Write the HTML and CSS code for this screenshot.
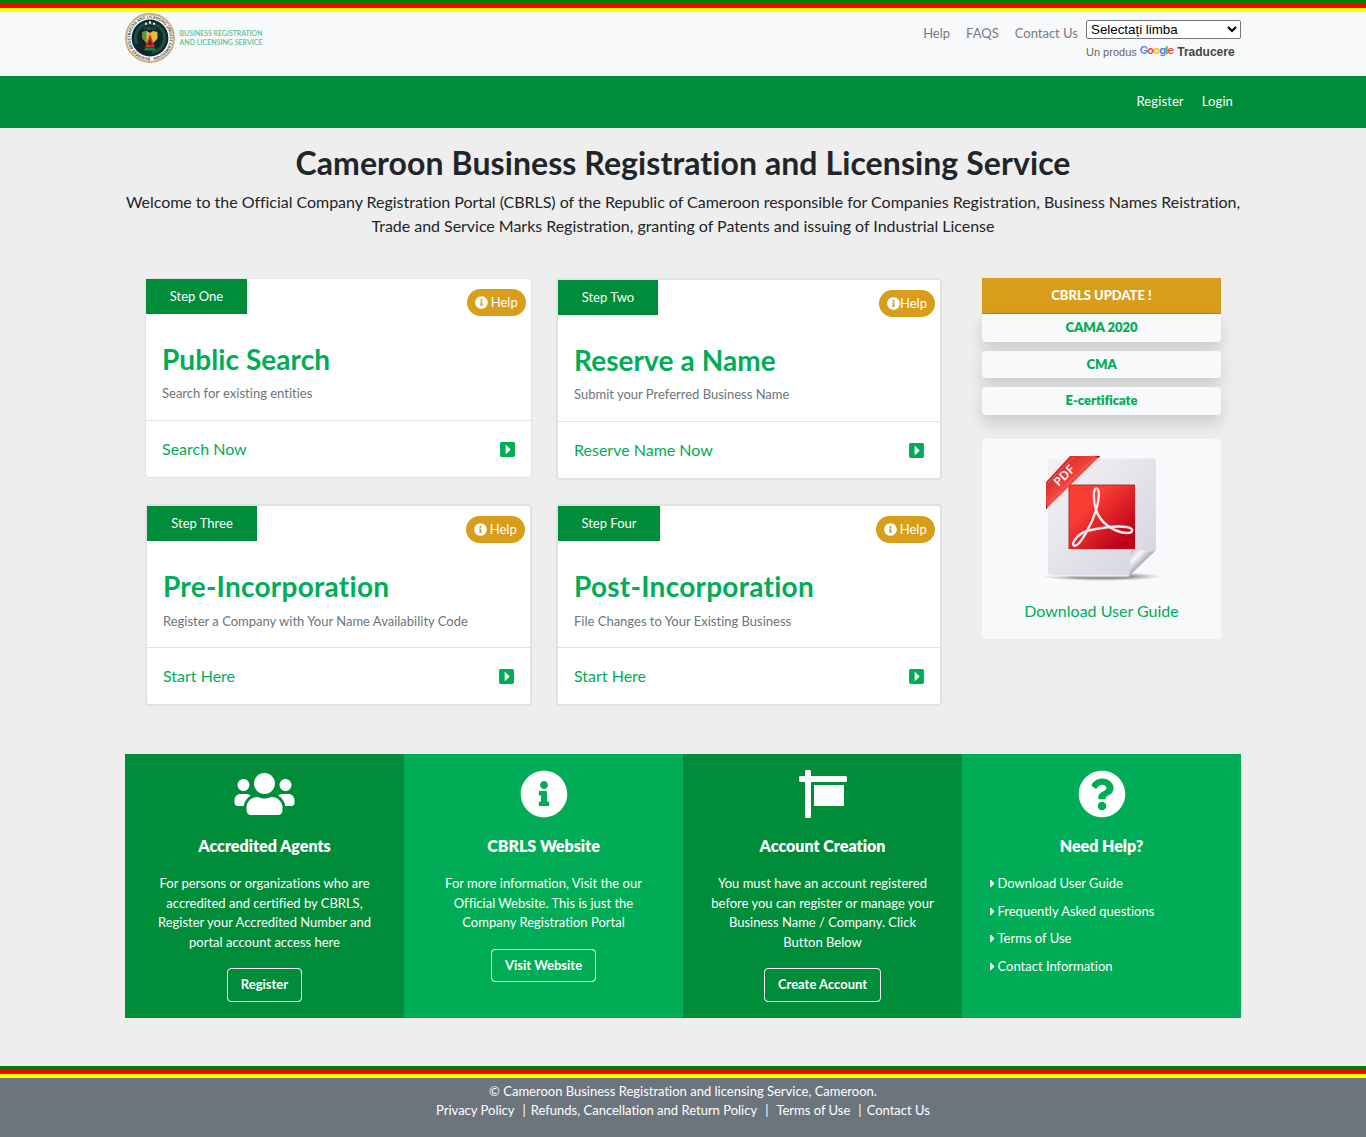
FILE: index.html
```html
<!DOCTYPE html>
<html lang="en">
<head>
<meta charset="utf-8">
<title>Cameroon Business Registration and Licensing Service</title>
<link rel="stylesheet" href="styles.css">
</head>
<body>
<svg class="sprite" aria-hidden="true">
  <symbol id="users" viewBox="0 0 640 512"><path d="M96 224c35.300 0 64-28.700 64-64s-28.700-64-64-64-64 28.700-64 64 28.700 64 64 64zm448 0c35.300 0 64-28.700 64-64s-28.700-64-64-64-64 28.700-64 64 28.700 64 64 64zm32 32h-64c-17.600 0-33.500 7.100-45.100 18.600 40.300 22.100 68.900 62 75.100 109.400h66c17.700 0 32-14.300 32-32v-32c0-35.300-28.700-64-64-64zm-256 0c61.900 0 112-50.100 112-112S381.900 32 320 32 208 82.100 208 144s50.100 112 112 112zm76.800 32h-8.300c-20.800 10-43.900 16-68.500 16s-47.600-6-68.500-16h-8.300C179.600 288 128 339.600 128 403.200V432c0 26.500 21.500 48 48 48h288c26.500 0 48-21.500 48-48v-28.800c0-63.600-51.600-115.200-115.200-115.200zm-223.700-13.400C161.500 263.100 145.600 256 128 256H64c-35.300 0-64 28.700-64 64v32c0 17.700 14.300 32 32 32h65.900c6.300-47.400 34.900-87.300 75.200-109.400z"/></symbol>
  <symbol id="info" viewBox="0 0 512 512"><path d="M256 8C119.043 8 8 119.083 8 256c0 136.997 111.043 248 248 248s248-111.003 248-248C504 119.083 392.957 8 256 8zm0 110c23.196 0 42 18.804 42 42s-18.804 42-42 42-42-18.804-42-42 18.804-42 42-42zm56 254c0 6.627-5.373 12-12 12h-88c-6.627 0-12-5.373-12-12v-24c0-6.627 5.373-12 12-12h12v-64h-12c-6.627 0-12-5.373-12-12v-24c0-6.627 5.373-12 12-12h64c6.627 0 12 5.373 12 12v100h12c6.627 0 12 5.373 12 12v24z"/></symbol>
  <symbol id="sign" viewBox="0 0 512 512"><path d="M496 64H128V16c0-8.800-7.200-16-16-16H80c-8.800 0-16 7.200-16 16v48H16C7.200 64 0 71.200 0 80v32c0 8.800 7.200 16 16 16h48v368c0 8.800 7.200 16 16 16h32c8.800 0 16-7.200 16-16V128h368c8.800 0 16-7.200 16-16V80c0-8.800-7.200-16-16-16zM160 384h320V160H160v224z"/></symbol>
  <symbol id="question" viewBox="0 0 512 512"><path d="M504 256c0 136.997-111.043 248-248 248S8 392.997 8 256C8 119.083 119.043 8 256 8s248 111.083 248 248zM262.655 90c-54.497 0-89.255 22.957-116.549 63.758-3.536 5.286-2.353 12.415 2.715 16.258l34.699 26.310c5.205 3.947 12.621 3.008 16.665-2.122 17.864-22.658 30.113-35.797 57.303-35.797 20.429 0 45.698 13.148 45.698 32.958 0 14.976-12.363 22.667-32.534 33.976C247.128 238.528 216 254.941 216 296v4c0 6.627 5.373 12 12 12h56c6.627 0 12-5.373 12-12v-1.333c0-28.462 83.186-29.647 83.186-106.667 0-58.002-60.165-102-116.531-102zM256 338c-25.365 0-46 20.635-46 46 0 25.364 20.635 46 46 46s46-20.636 46-46c0-25.365-20.635-46-46-46z"/></symbol>
  <symbol id="go" viewBox="0 0 448 512"><path d="M48 32h352c26.510 0 48 21.490 48 48v352c0 26.510-21.490 48-48 48H48c-26.510 0-48-21.490-48-48V80c0-26.510 21.490-48 48-48zm140.485 355.515l123.029-123.030c4.686-4.686 4.686-12.284 0-16.971l-123.029-123.030c-7.560-7.560-20.485-2.206-20.485 8.485v246.059c0 10.691 12.926 16.045 20.485 8.487z"/></symbol>
  <symbol id="caret" viewBox="0 0 192 512"><path d="M0 384.662V127.338c0-17.818 21.543-26.741 34.142-14.142l128.662 128.662c7.810 7.810 7.810 20.474 0 28.284L34.142 398.804C21.543 411.404 0 402.480 0 384.662z"/></symbol>
</svg>

<div class="stripes"></div>
<header class="top">
  <div class="container top-row">
    <svg class="logo" viewBox="0 0 140 52" width="140" height="52">
      <defs><path id="ring" d="M25 45.700a19.700 19.700 0 1 1 .1 0"/></defs>
      <circle cx="25" cy="26" r="24.300" fill="#fff" stroke="#cf9f50" stroke-width="1.200"/>
      <circle cx="25" cy="26" r="23.300" fill="none" stroke="#6f8577" stroke-width=".5"/>
      <text font-size="3.800" font-weight="700" fill="#222"><textPath href="#ring" textLength="120">BUSINESS REGISTRATION AND LICENSING SERVICE CAMEROON</textPath></text>
      <circle cx="25" cy="26" r="18.400" fill="#14242b"/>
      <circle cx="25" cy="26" r="14.600" fill="none" stroke="#17523a" stroke-width="3.200" stroke-dasharray="73.400 18.350" stroke-dashoffset="18.350" transform="rotate(-135 25 26)"/>
      <path d="M17.500 20l4.500-1 3 2 3-2 4.500 1v6.500l-7.500 8-7.500-8z" fill="#e7ba3a"/>
      <path d="M17.500 20l4-1v11l-4-4z" fill="#4d9a4b"/>
      <path d="M25 22l5 13.500H20z" fill="#d02f29"/>
      <path d="M25 27l2.500 6h-5z" fill="#5a2026"/>
      <path d="M20.500 36h9l2 2.500h-13z" fill="#16834b"/>
      <path d="M20 10.700h2v2h-2zM24 9.300h2v2.400h-2zM28 10.700h2v2h-2z" fill="#e7e9e8"/>
      <text x="19" y="18" font-size="3.600" fill="#2f9560" textLength="12">CBRLS</text>
      <g class="wordmark"><text x="54.500" y="24.400" textLength="83" lengthAdjust="spacingAndGlyphs">BUSINESS REGISTRATION</text><text x="54.500" y="33.400" textLength="83" lengthAdjust="spacingAndGlyphs">AND LICENSING SERVICE</text></g>
    </svg>
    <nav class="links"><a>Help</a><a>FAQS</a><a>Contact Us</a></nav>
    <div class="translate">
      <select><option>Selectați limba</option></select>
      <div class="powered">Un produs <span class="google"><i class="b">G</i><i class="r">o</i><i class="y">o</i><i class="b">g</i><i class="g">l</i><i class="r">e</i></span> <b>Traducere</b></div>
    </div>
  </div>
</header>
<div class="bar"><div class="container bar-row"><a>Register</a><a>Login</a></div></div>

<main class="container">
  <h1>Cameroon Business Registration and Licensing Service</h1>
  <p class="lead">Welcome to the Official Company Registration Portal (CBRLS) of the Republic of Cameroon responsible for Companies Registration, Business Names Reistration,<br>Trade and Service Marks Registration, granting of Patents and issuing of Industrial License</p>

  <div class="content">
    <div class="steps">
      <section class="card thin">
        <div class="card-body"><span class="tab t1">Step One</span><span class="pill"><svg><use href="#info"/></svg>Help</span><h3>Public Search</h3><p>Search for existing entities</p></div>
        <div class="card-foot"><a>Search Now</a><svg><use href="#go"/></svg></div>
      </section>
      <section class="card">
        <div class="card-body"><span class="tab t2">Step Two</span><span class="pill tight"><svg><use href="#info"/></svg>Help</span><h3>Reserve a Name</h3><p>Submit your Preferred Business Name</p></div>
        <div class="card-foot"><a>Reserve Name Now</a><svg><use href="#go"/></svg></div>
      </section>
      <section class="card lower">
        <div class="card-body"><span class="tab t3">Step Three</span><span class="pill"><svg><use href="#info"/></svg>Help</span><h3>Pre-Incorporation</h3><p>Register a Company with Your Name Availability Code</p></div>
        <div class="card-foot"><a>Start Here</a><svg><use href="#go"/></svg></div>
      </section>
      <section class="card lower">
        <div class="card-body"><span class="tab t4">Step Four</span><span class="pill"><svg><use href="#info"/></svg>Help</span><h3>Post-Incorporation</h3><p>File Changes to Your Existing Business</p></div>
        <div class="card-foot"><a>Start Here</a><svg><use href="#go"/></svg></div>
      </section>
    </div>
    <aside>
      <div class="updates">
        <div class="updates-head">CBRLS UPDATE !</div>
        <a class="first">CAMA 2020</a><a>CMA</a><a>E-certificate</a>
      </div>
      <div class="guide">
        <svg width="122" height="130" viewBox="0 0 122 130">
          <defs>
            <linearGradient id="paper" x1="0" y1="0" x2="1" y2="1"><stop offset="0" stop-color="#f3f3f6"/><stop offset="1" stop-color="#d3d4de"/></linearGradient>
            <linearGradient id="red" x1="0" y1="0" x2="1" y2="1"><stop offset=".3" stop-color="#fb3d33"/><stop offset=".85" stop-color="#bd0218"/></linearGradient>
            <linearGradient id="fold" x1="0" y1="0" x2="1" y2="1"><stop offset="0" stop-color="#a9abb6"/><stop offset=".28" stop-color="#f8f8fa"/><stop offset=".42" stop-color="#c6c7d0"/><stop offset=".55" stop-color="#9a9ca8"/></linearGradient>
            <linearGradient id="band" x1="0" y1="0" x2="1" y2="1"><stop offset=".2" stop-color="#d52a28"/><stop offset=".5" stop-color="#f9473f"/><stop offset=".6" stop-color="#c41e22"/></linearGradient>
            <radialGradient id="shade"><stop offset=".5" stop-color="#777" stop-opacity=".75"/><stop offset="1" stop-color="#999" stop-opacity="0"/></radialGradient>
          </defs>
          <ellipse cx="61" cy="122.500" rx="60" ry="4.500" fill="url(#shade)"/>
          <path d="M10 4.500h101q4 0 4 4V96L88 122H10q-3 0-3-3V7.500q0-3 3-3z" fill="url(#paper)"/>
          <path d="M8 120q1 2 3 2h77" fill="none" stroke="#fff" stroke-width="1.200"/>
          <path d="M115 96q-3 2.500-8 1-12-2-15-1.500-3 1-2.500 8 0 12-1.500 18.500z" fill="url(#fold)"/>
          <path d="M28 31h66v64H28z" fill="url(#red)"/>
          <path d="M28 95V31h66" fill="none" stroke="#a83332" stroke-width="1"/>
          <path fill="none" stroke="#eeeaf0" stroke-width="2.400" stroke-linejoin="round" d="M55 56C52 46 52 34.500 55.500 34.500S58 46 55.500 55C51 70 39 92 33.500 92c-5-2 4-13 14-15.500 14-3 28-5 38-3.500 9 1.500 6 6.500 0 6C71 77.500 59 68 55 56z"/>
          <path d="M29 2h30L5 55V28z" fill="url(#band)"/>
          <path d="M54 2h5l-1 2zM5 50v5l1.500-1z" fill="#9c1017"/>
          <path d="M33 3L6 30M53 4L7 49" stroke="#ffaaa5" stroke-width=".6" stroke-dasharray="1 .7"/>
          <text class="pdf" transform="translate(17.500 33) rotate(-45)" textLength="24" lengthAdjust="spacingAndGlyphs">PDF</text>
        </svg>
        <a>Download User Guide</a>
      </div>
    </aside>
  </div>

  <div class="tiles">
    <section class="tile dark"><svg class="wide"><use href="#users"/></svg><h4>Accredited Agents</h4><p>For persons or organizations who are<br>accredited and certified by CBRLS,<br>Register your Accredited Number and<br>portal account access here</p><a class="btn w1">Register</a></section>
    <section class="tile"><svg><use href="#info"/></svg><h4>CBRLS Website</h4><p>For more information, Visit the our<br>Official Website. This is just the<br>Company Registration Portal</p><a class="btn w2">Visit Website</a></section>
    <section class="tile dark"><svg><use href="#sign"/></svg><h4>Account Creation</h4><p>You must have an account registered<br>before you can register or manage your<br>Business Name / Company. Click<br>Button Below</p><a class="btn w3">Create Account</a></section>
    <section class="tile"><svg><use href="#question"/></svg><h4>Need Help?</h4>
      <ul><li><svg><use href="#caret"/></svg>Download User Guide</li><li><svg><use href="#caret"/></svg>Frequently Asked questions</li><li><svg><use href="#caret"/></svg>Terms of Use</li><li><svg><use href="#caret"/></svg>Contact Information</li></ul>
    </section>
  </div>
</main>

<div class="stripes"></div>
<footer>
  <div>© Cameroon Business Registration and licensing Service, Cameroon.</div>
  <div class="legal"><a>Privacy Policy</a><i class="s1">|</i><a>Refunds, Cancellation and Return Policy</a><i class="s2">|</i><a>Terms of Use</a><i class="s1">|</i><a>Contact Us</a></div>
</footer>
</body>
</html>
```
FILE: styles.css
```css
* { box-sizing: border-box; }
body { margin: 0; background: #eee; color: #212529; font: 400 16px/24px Lato, sans-serif; font-variant-ligatures: no-common-ligatures; }
h1, h3, h4, p, ul { margin: 0; padding: 0; }
svg { fill: currentColor; flex: none; }
.sprite { position: absolute; width: 0; height: 0; }
.container { width: 1116px; margin: 0 auto; }
.stripes { height: 12px; background: linear-gradient(green 0 4px, red 4px 8px, yellow 8px 12px); }

.top { height: 64px; background: #f8f9fa; }
.top-row { display: flex; align-items: flex-start; }
.logo { margin-right: auto; }
.wordmark { font-size: 7px; fill: #5fc190; font-weight: 600; }
.links { display: flex; gap: 16px; padding: 11px 8px 0 0; font-size: 13px; line-height: 20px; color: #757d85; }
.translate { width: 155px; padding-top: 8px; font-family: "Liberation Sans", Arial, sans-serif; }
.translate select { display: block; width: 155px; height: 19px; margin: 0; padding: 0; border: 1px solid #767676; border-radius: 2px; background: #fff; color: #000; font: 13.333px "Liberation Sans", Arial, sans-serif; }
.powered { display: flex; align-items: center; gap: 3px; margin-top: 4px; font-size: 11px; line-height: 18px; color: #666; white-space: nowrap; }
.powered b { font-size: 12px; color: #444; }
.google { font: 600 11px/16px Inter, sans-serif; letter-spacing: -.75px; margin-top: -4px; width: 34.500px; }
.google i { font-style: normal; }
.b { color: #4285f4; } .r { color: #ea4335; } .y { color: #fbbc05; } .g { color: #34a853; }

.bar { height: 52px; background: #008d3a; }
.bar-row { display: flex; justify-content: flex-end; gap: 18px; padding: 15px 8px 0 0; font-size: 13px; line-height: 20px; color: #fff; letter-spacing: .12px; }

h1 { padding-top: 16px; font-size: 32px; line-height: 38px; font-weight: 700; text-align: center; white-space: nowrap; letter-spacing: .08px; }
.lead { margin-top: 8px; text-align: center; white-space: nowrap; letter-spacing: -.03px; }

.content { display: flex; justify-content: space-between; padding: 40px 20px 0; }
.steps { display: grid; grid-template-columns: 387px 386px; column-gap: 24px; row-gap: 24px; align-items: start; }
.card { background: #fff; border: 2px solid #dee2e6; border-radius: 4px; }
.card.thin { border-width: 1px; }
.card-body { position: relative; height: 142px; padding-left: 16px; border-bottom: 1px solid #dee2e6; }
.tab { display: block; height: 35px; margin-left: -16px; background: #008d3a; color: #fff; font-size: 13px; line-height: 35px; text-align: center; }
.t1 { width: 101px; } .t2 { width: 100px; } .t3 { width: 110px; } .t4 { width: 102px; }
.pill { position: absolute; top: 10px; right: 5px; display: flex; align-items: center; justify-content: center; gap: 2.500px; width: 59px; height: 27px; border-radius: 14px; background: #d89e1b; color: #fff; font-size: 13px; line-height: 27px; }
.pill.tight { gap: 0; width: 56px; }
.pill svg { width: 13px; height: 13px; }
.card h3 { margin-top: 28px; font-size: 28px; line-height: 34px; font-weight: 700; color: #00ad56; letter-spacing: .08px; }
.card p { margin-top: 7px; font-size: 13px; line-height: 20px; color: #6c757d; }
.card.lower h3 { letter-spacing: .26px; }
.card.lower p { margin-top: 8px; }
.card-foot { display: flex; align-items: center; justify-content: space-between; height: 56px; padding: 0 16px; color: #00ad56; }
.card-foot svg { width: 15px; height: 17px; }

aside { width: 239px; }
.updates { display: grid; gap: 9px; text-align: center; font-weight: 700; font-size: 13px; color: #00ad56; }
.updates-head { height: 36px; background: #d89e1b; border-bottom: 1px solid #bd8a19; color: #fff; line-height: 35px; font-weight: 900; }
.updates a { height: 28px; line-height: 27px; border-radius: 4px; background: #f8f9fa; box-shadow: 0 8px 16px rgba(0, 0, 0, .15); font-weight: 800; }
.updates .first { margin-top: -9px; border-radius: 0 0 4px 4px; }
.updates .first + a { height: 27px; }
.guide { display: flex; flex-direction: column; align-items: center; height: 200px; margin-top: 24px; padding-top: 15px; border-radius: 4px; background: #f8f9fa; color: #00ad56; }
.guide a { margin-top: 15px; }
.pdf { font: 600 12px "Open Sans", sans-serif; fill: #fff; }

.tiles { display: grid; grid-template-columns: repeat(4, 279px); height: 264px; margin: 48px 0; color: #fff; }
.tile { display: flex; flex-direction: column; align-items: center; padding-top: 16px; background: #00ad56; text-align: center; font-size: 13px; line-height: 19.5px; white-space: nowrap; }
.tile.dark { background: #008d3a; }
.tile > svg { width: 48px; height: 48px; }
.tile > svg.wide { width: 61px; }
.tile h4 { margin-top: 18px; font-size: 16px; line-height: 20px; font-weight: 800; }
.tile p { margin-top: 18px; }
.btn { height: 33.500px; margin-top: 16px; border: 1px solid #fff; border-radius: 4px; font-weight: 700; line-height: 31px; }
.w1 { width: 75px; } .w2 { width: 105px; } .w3 { width: 117px; }
.tile ul { align-self: stretch; margin-top: 18px; padding-left: 28px; list-style: none; text-align: left; }
.tile li { display: flex; align-items: center; gap: 2.500px; margin-bottom: 8px; }
.tile li svg { width: 5px; height: 13px; }

footer { height: 59px; padding-top: 4px; background: #6c757d; color: #fff; text-align: center; font-size: 13px; line-height: 19px; }
.legal { display: flex; justify-content: center; }
.legal i { font-style: normal; }
.s1 { margin: 0 5px 0 8px; } .s2 { margin: 0 8px; }
```
